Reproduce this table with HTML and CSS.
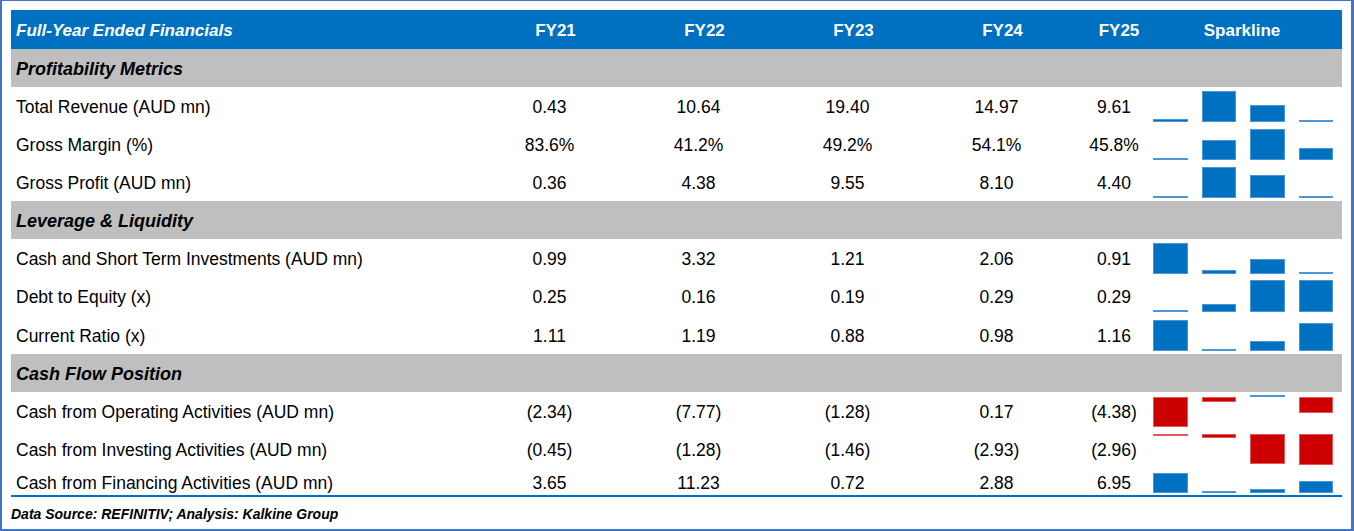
FILE: index.html
```html
<!DOCTYPE html>
<html lang="en">
<head>
<meta charset="utf-8">
<title>Full-Year Ended Financials</title>
<link rel="stylesheet" href="styles.css">
</head>
<body>
<div class="frame">
  <div class="table">
    <div class="row head">
      <div class="label">Full-Year Ended Financials</div>
      <div class="fy">FY21</div>
      <div class="fy">FY22</div>
      <div class="fy">FY23</div>
      <div class="fy">FY24</div>
      <div class="fy fy25">FY25</div>
      <div class="spark-head">Sparkline</div>
    </div>

    <div class="section">Profitability Metrics</div>
    <div class="row">
      <div class="label">Total Revenue (AUD mn)</div>
      <div class="num">0.43</div><div class="num">10.64</div><div class="num">19.40</div><div class="num">14.97</div><div class="num last">9.61</div>
      <div class="spark"><i class="bar" style="height:3px"></i><i class="bar" style="height:31px"></i><i class="bar" style="height:17px"></i><i class="bar" style="height:1.5px"></i></div>
    </div>
    <div class="row">
      <div class="label">Gross Margin (%)</div>
      <div class="num">83.6%</div><div class="num">41.2%</div><div class="num">49.2%</div><div class="num">54.1%</div><div class="num last">45.8%</div>
      <div class="spark"><i class="bar" style="height:1.5px"></i><i class="bar" style="height:20px"></i><i class="bar" style="height:31px"></i><i class="bar" style="height:11.5px"></i></div>
    </div>
    <div class="row">
      <div class="label">Gross Profit (AUD mn)</div>
      <div class="num">0.36</div><div class="num">4.38</div><div class="num">9.55</div><div class="num">8.10</div><div class="num last">4.40</div>
      <div class="spark"><i class="bar" style="height:1.5px"></i><i class="bar" style="height:31px"></i><i class="bar" style="height:23px"></i><i class="bar" style="height:1.5px"></i></div>
    </div>

    <div class="section">Leverage &amp; Liquidity</div>
    <div class="row">
      <div class="label">Cash and Short Term Investments (AUD mn)</div>
      <div class="num">0.99</div><div class="num">3.32</div><div class="num">1.21</div><div class="num">2.06</div><div class="num last">0.91</div>
      <div class="spark"><i class="bar" style="height:31px"></i><i class="bar" style="height:4px"></i><i class="bar" style="height:15px"></i><i class="bar" style="height:1.5px"></i></div>
    </div>
    <div class="row">
      <div class="label">Debt to Equity (x)</div>
      <div class="num">0.25</div><div class="num">0.16</div><div class="num">0.19</div><div class="num">0.29</div><div class="num last">0.29</div>
      <div class="spark"><i class="bar" style="height:2px"></i><i class="bar" style="height:8px"></i><i class="bar" style="height:31.5px"></i><i class="bar" style="height:31.5px"></i></div>
    </div>
    <div class="row tall">
      <div class="label">Current Ratio (x)</div>
      <div class="num">1.11</div><div class="num">1.19</div><div class="num">0.88</div><div class="num">0.98</div><div class="num last">1.16</div>
      <div class="spark"><i class="bar" style="height:31px"></i><i class="bar" style="height:1.5px"></i><i class="bar" style="height:10px"></i><i class="bar" style="height:28px"></i></div>
    </div>

    <div class="section">Cash Flow Position</div>
    <div class="row">
      <div class="label">Cash from Operating Activities (AUD mn)</div>
      <div class="num">(2.34)</div><div class="num">(7.77)</div><div class="num">(1.28)</div><div class="num">0.17</div><div class="num last">(4.38)</div>
      <div class="spark down"><i class="bar neg" style="height:30px"></i><i class="bar neg" style="height:5.5px"></i><i class="bar up" style="height:1.5px"></i><i class="bar neg" style="height:16.5px"></i></div>
    </div>
    <div class="row">
      <div class="label">Cash from Investing Activities (AUD mn)</div>
      <div class="num">(0.45)</div><div class="num">(1.28)</div><div class="num">(1.46)</div><div class="num">(2.93)</div><div class="num last">(2.96)</div>
      <div class="spark down axis-high"><i class="bar neg" style="height:1.5px"></i><i class="bar neg" style="height:3.5px"></i><i class="bar neg" style="height:30px"></i><i class="bar neg" style="height:31px"></i></div>
    </div>
    <div class="row short">
      <div class="label">Cash from Financing Activities (AUD mn)</div>
      <div class="num">3.65</div><div class="num">11.23</div><div class="num">0.72</div><div class="num">2.88</div><div class="num last">6.95</div>
      <div class="spark"><i class="bar" style="height:20.5px"></i><i class="bar" style="height:1.5px"></i><i class="bar" style="height:4.5px"></i><i class="bar" style="height:12.5px"></i></div>
    </div>
  </div>
  <div class="source">Data Source: REFINITIV; Analysis: Kalkine Group</div>
</div>
</body>
</html>
```

FILE: styles.css
```css
* {
  box-sizing: border-box;
}

html, body {
  margin: 0;
  padding: 0;
  background: #ffffff;
}

body {
  font-family: "Liberation Sans", Arial, sans-serif;
  color: #000000;
}

.frame {
  width: 1354px;
  height: 531px;
  border-style: solid;
  border-color: #4472c4;
  border-width: 1px 3px 2px 2px;
  padding: 9px 9px 0 9px;
  display: flex;
  flex-direction: column;
}

.table {
  width: 1331px;
  border-bottom: 2px solid #0070c0;
}

.row {
  display: grid;
  grid-template-columns: 464px 149px 149px 149px 149px 74px 197px;
  height: 38px;
  align-items: center;
  font-size: 17.5px;
}

.row > .label,
.row > .num {
  padding-top: 3px;
}

.row.tall {
  height: 39px;
}

.row.short {
  height: 27px;
  align-items: end;
}

.row.short > .label,
.row.short > .num {
  padding-top: 0;
  padding-bottom: 1px;
}

.row.short > .spark {
  padding-bottom: 2px;
}

.label {
  padding-left: 5px;
  white-space: nowrap;
}

.num {
  text-align: center;
  white-space: nowrap;
}

.num.last {
  padding-left: 12px;
}

.head {
  height: 39px;
  background: #0070c0;
  color: #ffffff;
  font-weight: bold;
  font-size: 17px;
}

.head > div {
  padding-top: 2px;
}

.head .label {
  font-style: italic;
  padding-top: 3px;
}

.head .fy {
  text-align: center;
  padding-left: 12px;
}

.head .fy25 {
  padding-left: 22px;
}

.head .spark-head {
  text-align: center;
  padding-right: 3px;
}

.section {
  height: 38px;
  background: #bfbfbf;
  font-size: 18px;
  font-weight: bold;
  font-style: italic;
  padding-left: 5px;
  padding-top: 2px;
  display: flex;
  align-items: center;
}

.spark {
  align-self: stretch;
  display: flex;
  align-items: flex-end;
  gap: 14px;
  padding-left: 8px;
  padding-bottom: 3.5px;
}

.spark.down {
  align-items: flex-start;
  padding-bottom: 0;
  padding-top: 4.5px;
}

.spark.down.axis-high {
  padding-top: 4px;
}

.bar {
  display: block;
  width: 34.5px;
  background: #0070c0;
  border: 1px solid #4a96d6;
}

.bar.neg {
  background: #cc0000;
  border-color: #e05a5a;
}

.bar.up {
  transform: translateY(-100%);
  background: #3a8fd8;
}

.source {
  height: 32px;
  display: flex;
  align-items: center;
  font-size: 14px;
  font-weight: bold;
  font-style: italic;
  padding-top: 1px;
}
```
